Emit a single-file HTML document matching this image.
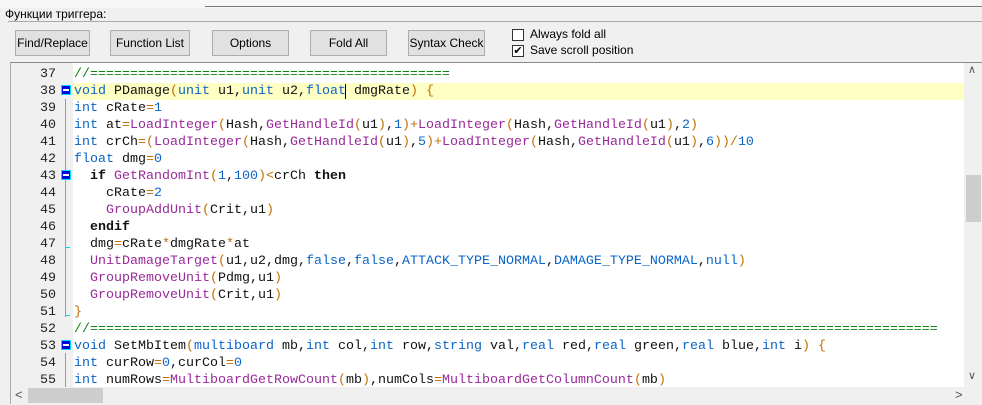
<!DOCTYPE html>
<html><head><meta charset="utf-8"><style>
*{margin:0;padding:0;box-sizing:border-box}
body{width:982px;height:404px;background:#f0f0f0;position:relative;overflow:hidden;font-family:"Liberation Sans",sans-serif;font-size:12px;color:#000}
.abs{position:absolute}
.btn{position:absolute;top:30px;height:26px;background:#e1e1e1;border:1px solid #adadad;font-size:12px;text-align:center;line-height:24px}
.cb{position:absolute;left:512px;width:12px;height:12px;border:1px solid #333;background:#fff;font-size:11px;line-height:10px;text-align:center}
.ed{position:absolute;left:10px;top:62px;width:972px;height:342px;border-top:1px solid #888;border-left:1px solid #aaa;background:#fff}
.gut{position:absolute;left:0;top:0;width:62px;height:324px;background:#f0f0f0}
.ln{position:absolute;left:0;width:45px;text-align:right;font-family:"Liberation Mono",monospace;font-size:13.33px;color:#222}
.row{position:absolute;left:63px;height:17px;line-height:17px;font-family:"Liberation Mono",monospace;font-size:13.33px;white-space:pre;color:#111}
.k{color:#0a64c8}.f{color:#9a2a9a}.p{color:#c07000}.c{color:#108010}.b{font-weight:bold}
.fold{position:absolute;left:50px;width:10px;height:10px;background:#0000e0;border:1px solid #00e0ff}
.fold:after{content:"";position:absolute;left:1px;top:3px;width:6px;height:2px;background:#fff}
.vl{position:absolute;left:54px;width:1px;background:#00d8f0}
</style></head><body>
<div class="abs" style="left:0;top:0;width:982px;height:8px;background:#f7f7f7"></div>
<div class="abs" style="left:205px;top:6px;width:777px;height:1px;background:#777"></div>
<div class="abs" style="left:5px;top:7px;font-size:12px">Функции триггера:</div>
<div class="abs" style="left:8px;top:21px;width:974px;height:1px;background:#aaa"></div>
<div class="btn" style="left:15px;width:75px">Find/Replace</div>
<div class="btn" style="left:110px;width:80px">Function List</div>
<div class="btn" style="left:212px;width:77px">Options</div>
<div class="btn" style="left:310px;width:77px">Fold All</div>
<div class="btn" style="left:408px;width:77px">Syntax Check</div>
<div class="cb" style="top:29px"></div><div class="abs" style="left:530px;top:27px">Always fold all</div>
<div class="cb" style="top:45px">✔</div><div class="abs" style="left:530px;top:43px">Save scroll position</div>
<div class="ed">
<div class="gut"></div>
<div class="abs" style="left:62px;top:20px;width:891px;height:17px;background:#ffffc4"></div>
<div class="vl" style="top:36px;height:218px"></div>
<div class="vl" style="top:290px;height:34px"></div>
<div class="abs" style="left:54px;top:252px;width:5px;height:1px;background:#00d8f0"></div>
<div class="abs" style="left:54px;top:184px;width:5px;height:1px;background:#00d8f0"></div>
<div class="fold" style="top:22px"></div>
<div class="fold" style="top:107px"></div>
<div class="fold" style="top:277px"></div>
<div id="rows"></div>
<div class="abs" style="left:334px;top:21px;width:1px;height:15px;background:#000"></div>
<div class="abs" style="left:953px;top:0;width:19px;height:324px;background:#f0f0f0"></div>
<div class="abs" style="left:955px;top:112px;width:15px;height:47px;background:#cdcdcd"></div>
<div class="abs" style="left:957px;top:0px;font-size:11px;color:#555">&#x2227;</div>
<div class="abs" style="left:957px;top:306px;font-size:11px;color:#555">&#x2228;</div>
<div class="abs" style="left:0;top:324px;width:972px;height:18px;background:#f0f0f0"></div>
<div class="abs" style="left:17px;top:325px;width:75px;height:15px;background:#cdcdcd"></div>
<div class="abs" style="left:4px;top:324px;font-size:13px;color:#555">&lt;</div>
<div class="abs" style="left:944px;top:324px;font-size:13px;color:#555">&gt;</div>
</div>
<script>
const L=[
[37,'<span class="c">//'+'='.repeat(45)+'</span>'],
[38,'<span class="k">void</span> PDamage<span class="p">(</span><span class="k">unit</span> u1,<span class="k">unit</span> u2,<span class="k">float</span> dmgRate<span class="p">)</span> <span class="p">{</span>'],
[39,'<span class="k">int</span> cRate<span class="p">=</span><span class="k">1</span>'],
[40,'<span class="k">int</span> at<span class="p">=</span><span class="f">LoadInteger</span><span class="p">(</span>Hash,<span class="f">GetHandleId</span><span class="p">(</span>u1<span class="p">)</span>,<span class="k">1</span><span class="p">)+</span><span class="f">LoadInteger</span><span class="p">(</span>Hash,<span class="f">GetHandleId</span><span class="p">(</span>u1<span class="p">)</span>,<span class="k">2</span><span class="p">)</span>'],
[41,'<span class="k">int</span> crCh<span class="p">=(</span><span class="f">LoadInteger</span><span class="p">(</span>Hash,<span class="f">GetHandleId</span><span class="p">(</span>u1<span class="p">)</span>,<span class="k">5</span><span class="p">)+</span><span class="f">LoadInteger</span><span class="p">(</span>Hash,<span class="f">GetHandleId</span><span class="p">(</span>u1<span class="p">)</span>,<span class="k">6</span><span class="p">))/</span><span class="k">10</span>'],
[42,'<span class="k">float</span> dmg<span class="p">=</span><span class="k">0</span>'],
[43,'  <span class="b">if</span> <span class="f">GetRandomInt</span><span class="p">(</span><span class="k">1</span>,<span class="k">100</span><span class="p">)&lt;</span>crCh <span class="b">then</span>'],
[44,'    cRate<span class="p">=</span><span class="k">2</span>'],
[45,'    <span class="f">GroupAddUnit</span><span class="p">(</span>Crit,u1<span class="p">)</span>'],
[46,'  <span class="b">endif</span>'],
[47,'  dmg<span class="p">=</span>cRate<span class="p">*</span>dmgRate<span class="p">*</span>at'],
[48,'  <span class="f">UnitDamageTarget</span><span class="p">(</span>u1,u2,dmg,<span class="k">false</span>,<span class="k">false</span>,<span class="k">ATTACK_TYPE_NORMAL</span>,<span class="k">DAMAGE_TYPE_NORMAL</span>,<span class="k">null</span><span class="p">)</span>'],
[49,'  <span class="f">GroupRemoveUnit</span><span class="p">(</span>Pdmg,u1<span class="p">)</span>'],
[50,'  <span class="f">GroupRemoveUnit</span><span class="p">(</span>Crit,u1<span class="p">)</span>'],
[51,'<span class="p">}</span>'],
[52,'<span class="c">//'+'='.repeat(106)+'</span>'],
[53,'<span class="k">void</span> SetMbItem<span class="p">(</span><span class="k">multiboard</span> mb,<span class="k">int</span> col,<span class="k">int</span> row,<span class="k">string</span> val,<span class="k">real</span> red,<span class="k">real</span> green,<span class="k">real</span> blue,<span class="k">int</span> i<span class="p">)</span> <span class="p">{</span>'],
[54,'<span class="k">int</span> curRow<span class="p">=</span><span class="k">0</span>,curCol<span class="p">=</span><span class="k">0</span>'],
[55,'<span class="k">int</span> numRows<span class="p">=</span><span class="f">MultiboardGetRowCount</span><span class="p">(</span>mb<span class="p">)</span>,numCols<span class="p">=</span><span class="f">MultiboardGetColumnCount</span><span class="p">(</span>mb<span class="p">)</span>']];
let h='';L.forEach((l,i)=>{const t=3+i*17;h+=`<div class="ln" style="top:${t}px;line-height:17px">${l[0]}</div><div class="row" style="top:${t}px">${l[1]}</div>`});
document.getElementById('rows').innerHTML=h;
</script>
</body></html>
